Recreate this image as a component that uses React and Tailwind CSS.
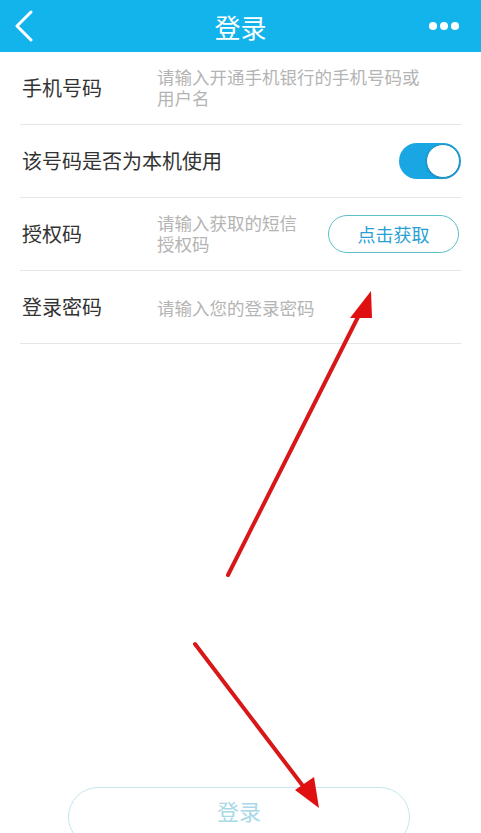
const font = { fontFamily: '"Noto Sans CJK SC", "Noto Sans", sans-serif' }

function Row({ label, children, right }) {
  return (
    <div className="mx-5 flex h-[73px] items-center border-b border-[#e6e6e6]">
      <div className="w-[137px] shrink-0 pl-[2px] text-[20px] text-[#333]">{label}</div>
      <div className="flex-1 text-[17.5px] leading-[21px] text-[#b4b4b4]">{children}</div>
      {right}
    </div>
  )
}

export default function App() {
  return (
    <div className="relative h-[833px] w-[481px] overflow-hidden bg-white" style={font}>
      {/* Header */}
      <div className="grid h-[52px] grid-cols-[1fr_auto_1fr] items-center bg-[#12b4eb] pl-[14px] text-white">
        <svg width="20" height="32" viewBox="0 0 20 32" fill="none">
          <path d="M17 2 L3 16 L17 30" stroke="white" strokeWidth="3" strokeLinecap="round" strokeLinejoin="round" />
        </svg>
        <div className="pr-[14px] text-[26px]">登录</div>
        <div className="flex justify-end gap-[3px] pr-[22px]">
          <span className="h-[8px] w-[8px] rounded-full bg-white" />
          <span className="h-[8px] w-[8px] rounded-full bg-white" />
          <span className="h-[8px] w-[8px] rounded-full bg-white" />
        </div>
      </div>

      <Row label="手机号码">
        <div className="w-[275px] pb-[3px]">请输入开通手机银行的手机号码或用户名</div>
      </Row>

      <div className="mx-5 flex h-[73px] items-center justify-between border-b border-[#e6e6e6]">
        <div className="pl-[2px] text-[20px] text-[#333]">该号码是否为本机使用</div>
        <div className="flex h-[36px] w-[62px] items-center justify-end rounded-full bg-[#1aa6e2] p-[1px]">
          <div className="h-[34px] w-[34px] rounded-full border border-[#1b8fc2] bg-white shadow" />
        </div>
      </div>

      <Row
        label="授权码"
        right={
          <div className="mr-[2px] flex h-[38px] w-[131px] items-center justify-center rounded-full border border-[#5cbfca] text-[18px] text-[#2a9fd4]">
            点击获取
          </div>
        }
      >
        <div className="w-[150px] pb-[3px]">请输入获取的短信授权码</div>
      </Row>

      <Row label="登录密码">
        <div>请输入您的登录密码</div>
      </Row>

      {/* Bottom login button */}
      <div className="absolute left-[68px] top-[787px] flex h-[60px] w-[342px] justify-center rounded-[30px] border border-[#c5e6ee] pt-[6px] text-[22px] text-[#a9d9e6]">
        登录
      </div>

      {/* Red annotation arrows */}
      <svg className="pointer-events-none absolute left-0 top-0" width="481" height="833">
        <line x1="228" y1="575" x2="361" y2="311" stroke="#d81818" strokeWidth="4" strokeLinecap="round" />
        <path d="M371 291 L350 318 L372 318 Z" fill="#e01010" />
        <line x1="195" y1="644" x2="306" y2="790" stroke="#d81818" strokeWidth="4" strokeLinecap="round" />
        <path d="M319 808 L295 790 L314 777 Z" fill="#e01010" />
      </svg>
    </div>
  )
}
